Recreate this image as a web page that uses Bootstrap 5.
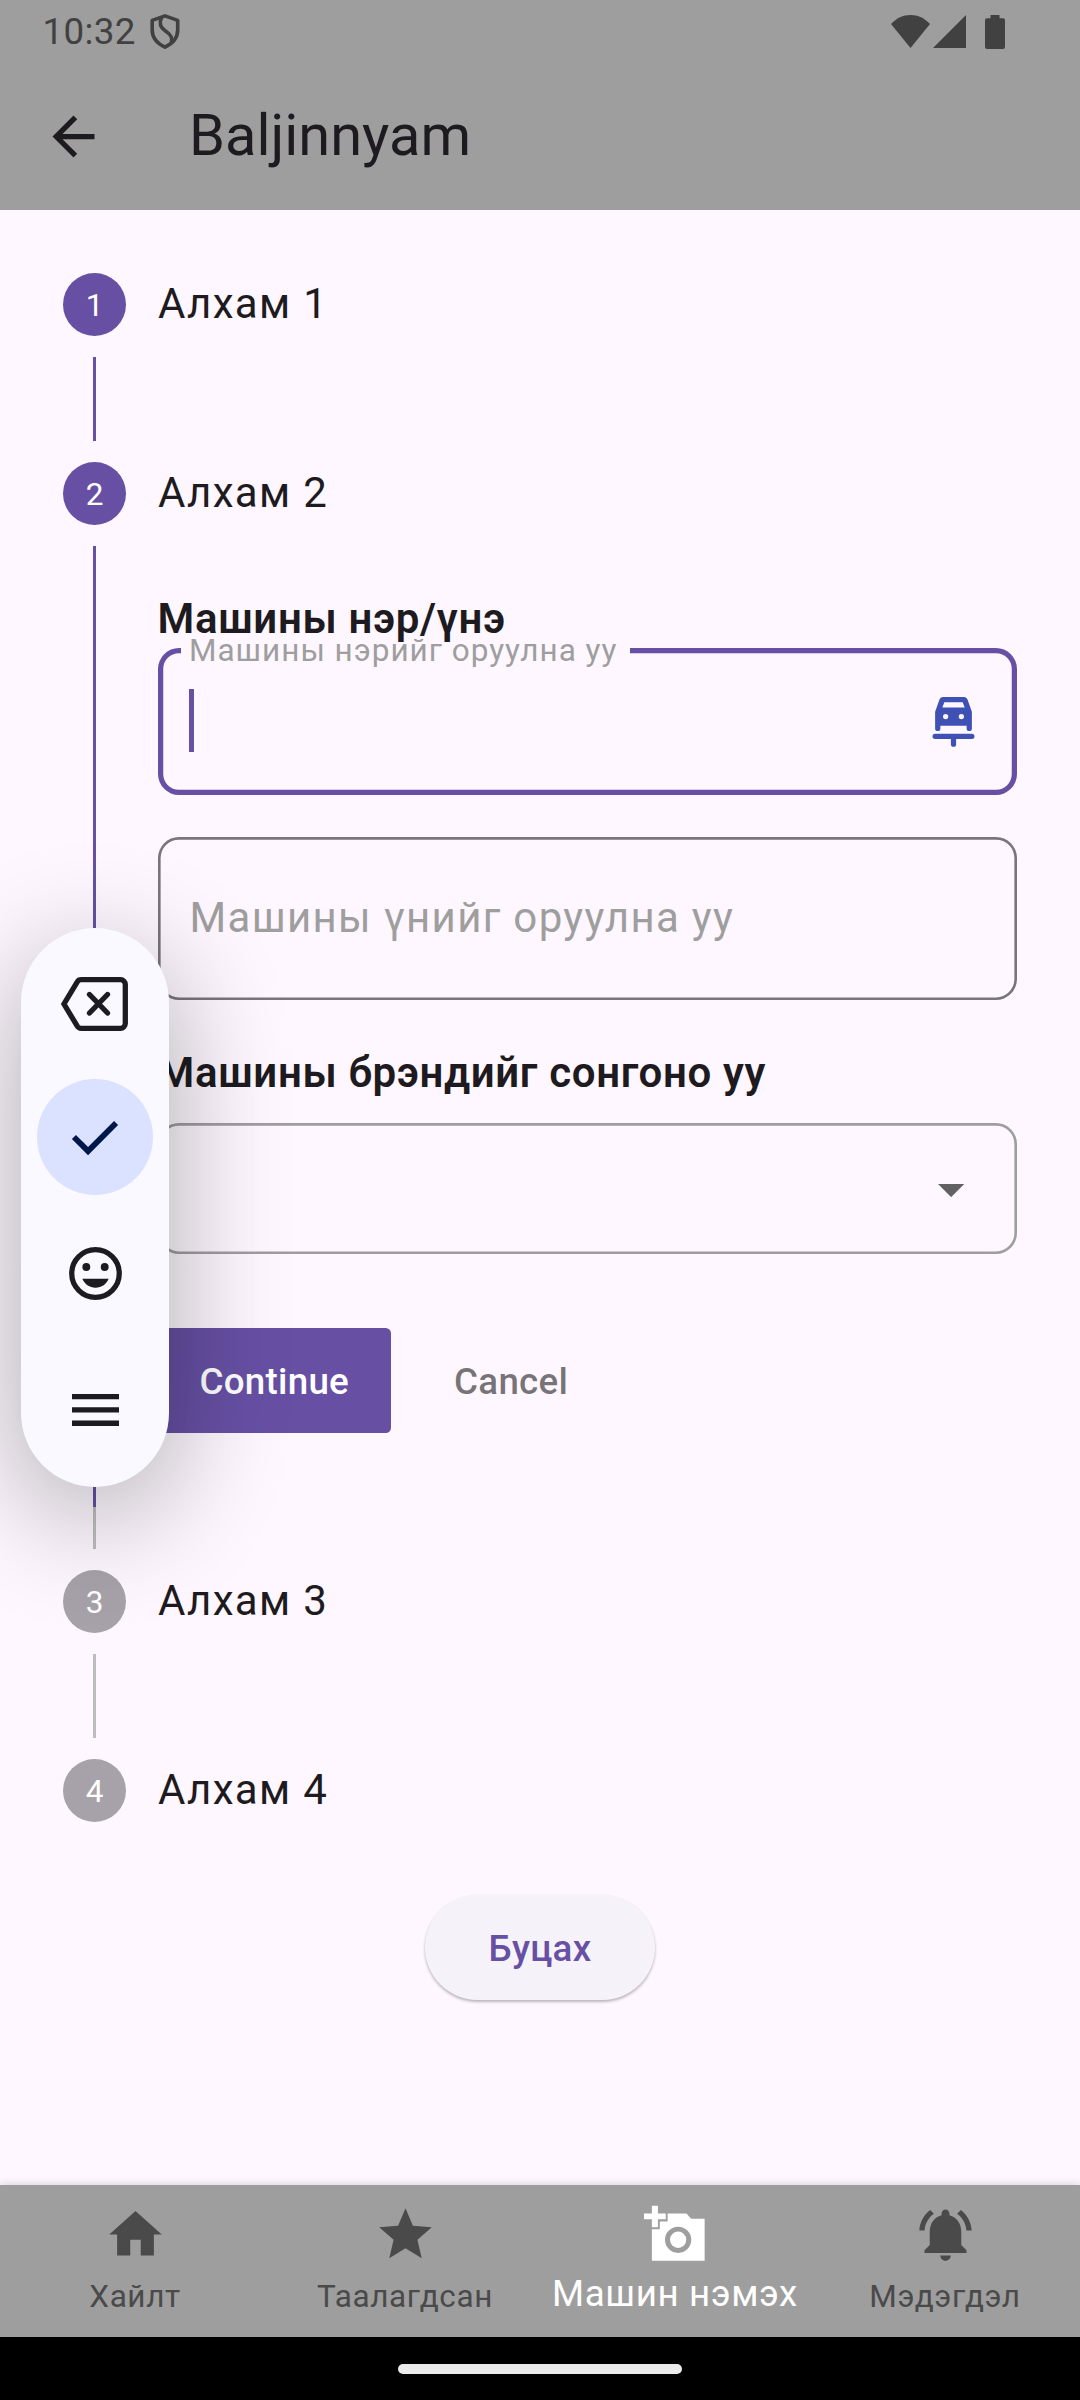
<!DOCTYPE html>
<html lang="mn">
<head>
<meta charset="utf-8">
<meta name="viewport" content="width=device-width, initial-scale=1">
<title>Baljinnyam</title>
<link href="https://cdn.jsdelivr.net/npm/bootstrap@5.3.0/dist/css/bootstrap.min.css" rel="stylesheet">
<style>
  :root { --violet: #6750a4; --gray: #9e9e9e; --ink: #1d1b20; --surface: #fef7ff; }
  body { font-family: Roboto, "Liberation Sans", sans-serif; background: var(--surface); color: var(--ink); font-size: 42px; letter-spacing: 1.3125px; }
  svg { display: block; flex: none; }
  .screen { width: 1080px; height: 2400px; overflow: hidden; }
  .top-area { background: var(--gray); height: 210px; }
  .status-row { height: 63px; padding: 0 75px 0 42.5px; color: #414141; }
  .clock { font-size: 36.75px; line-height: 63px; letter-spacing: .35px; }
  .app-row { height: 147px; padding-left: 42px; }
  .app-title { font-size: 57.75px; line-height: 60px; letter-spacing: 0; margin-left: 84px; font-weight: 400; padding-bottom: 4px; }
  .stepper { padding: 63px 63px 0; }
  .step-head { height: 63px; gap: 32px; }
  .step-dot { width: 63px; height: 63px; font-size: 31.5px; line-height: 63px; letter-spacing: 0; background: var(--violet); color: #fff; padding-top: 1px; }
  .step-dot.idle { background: #a7a2a9; }
  .step-name { line-height: 63px; margin-top: -3px; }
  .rail { width: 63px; padding: 21px 0; flex: none; }
  .rail-line { width: 2.625px; background: var(--violet); }
  .rail-line.idle { background: #bdbdbd; }
  .short { height: 84px; }
  .step-body { height: 1045px; gap: 31.5px; }
  .form-col { padding-top: 69px; width: 859px; flex: none; }
  .form-heading { font-size: 42px; line-height: 50px; font-weight: 600; letter-spacing: .66px; margin: 0; }
  .outlined { border-radius: 21px; }
  .field-name { height: 147px; margin-top: 4.4px; box-shadow: inset 0 0 0 5.25px var(--violet); padding: 0 31.5px 2px; }
  .notch-label { left: 23.5px; top: -16px; width: 449px; padding-left: 8px; font-size: 31.5px; line-height: 38px; letter-spacing: .984px; color: var(--gray); white-space: nowrap;
    background: linear-gradient(var(--surface), var(--surface)) 0 15px / 100% 8px no-repeat; }
  .caret-bar { width: 5.25px; height: 63px; background: var(--violet); }
  .field-price { height: 163px; margin-top: 41.6px; box-shadow: inset 0 0 0 2.625px #79747e; padding: 0 32px; color: var(--gray); line-height: 161px; }
  .brand-heading { margin-top: 48px; }
  .field-brand { height: 131.25px; margin-top: 25px; box-shadow: inset 0 0 0 2.625px var(--gray); padding: 3px 52px 0 0; }
  .actions { margin-top: 73.4px; gap: 21px; }
  .act { height: 105px; padding: 0 42px; border: 0; font-size: 36.75px; font-weight: 500; letter-spacing: .26px; line-height: 107px; border-radius: 5.25px; }
  .act-main, .act-main:hover { background: var(--violet); color: #fff; }
  .act-plain { color: rgba(0,0,0,.54); }
  .act-back { margin-top: 73px; width: 230px; border-radius: 53px; background: #f6f2f9; color: var(--violet); box-shadow: 0 2px 3px rgba(0,0,0,.24), 0 1px 3px rgba(0,0,0,.06); padding: 0; }
  .tools { left: 21px; top: 928px; width: 148px; height: 559px; border-radius: 74px; background: #f9f9ff; padding-top: 5px; box-shadow: 0 28px 118px rgba(0,0,0,.33); color: #1b1b21; z-index: 5; }
  .tool { height: 136.3px; }
  .tool:first-child { padding: 5px 2px 0 0; }
  .tool-round { width: 116px; height: 116px; background: #dae2ff; color: #001849; }
  .bottom-nav { background: var(--gray); height: 152.5px; color: #4a4a4a; box-shadow: 0 -1px 8px rgba(0,0,0,.14); z-index: 2; padding-top: 18px; }
  .nav-cell { width: 270px; white-space: nowrap; font-size: 31.5px; line-height: 38px; letter-spacing: .6px; }
  .nav-cell span { margin-top: 12px; }
  .nav-cell.chosen { color: #fff; font-size: 36.75px; letter-spacing: .6px; line-height: 38px; }
  .nav-cell.chosen span { margin-top: 9px; }
  .gesture { background: #000; height: 63px; padding-top: 27px; }
  .gesture-bar { width: 284px; height: 10px; background: #ebebeb; }
</style>
</head>
<body>
<div class="screen d-flex flex-column position-relative">
  <header class="top-area flex-shrink-0">
    <div class="status-row d-flex align-items-center">
      <span class="clock">10:32</span>
      <svg width="30" height="35" viewBox="0 0 30 35" fill="none" stroke="currentColor" stroke-width="3.6" style="margin-left:14.5px"><path d="M15 1.9 27.7 6.4V16c0 7.5-4.8 13.4-12.7 17.2C7 29.4 2.2 23.5 2.2 16V6.4z" stroke-linejoin="round"/><path d="M11.5 3.5C8.5 10 11 14 15.5 17c5.5 3.5 7 6.500 6 11.500"/></svg>
      <svg class="ms-auto" width="39" height="33" viewBox="0 0 39 33" fill="currentColor"><path d="M0 9C5.500 3.200 12 0 19.500 0S33.500 3.200 39 9L19.500 33z"/></svg>
      <svg width="33" height="33" viewBox="0 0 33 33" fill="currentColor" style="margin-left:3.500px"><path d="M33 0v33H0z"/></svg>
      <svg width="20" height="34" viewBox="0 0 20 34" fill="currentColor" style="margin-left:19px"><path d="M5.500 0h9v3.300H18a2 2 0 0 1 2 2V32a2 2 0 0 1-2 2H2a2 2 0 0 1-2-2V5.300a2 2 0 0 1 2-2h3.500z"/></svg>
    </div>
    <div class="app-row d-flex align-items-center">
      <svg width="63" height="63" viewBox="0 0 24 24" fill="var(--ink)"><path d="M20 11H7.830l5.590-5.590L12 4l-8 8 8 8 1.410-1.410L7.830 13H20v-2z"/></svg>
      <h1 class="app-title mb-0">Baljinnyam</h1>
    </div>
  </header>

  <main class="flex-grow-1 d-flex flex-column">
    <div class="stepper">
      <div class="step-head d-flex align-items-center"><div class="step-dot rounded-circle text-center">1</div><div class="step-name">Алхам 1</div></div>
      <div class="rail d-flex flex-column align-items-center"><div class="rail-line short"></div></div>

      <div class="step-head d-flex align-items-center"><div class="step-dot rounded-circle text-center">2</div><div class="step-name">Алхам 2</div></div>
      <div class="step-body d-flex">
        <div class="rail d-flex flex-column align-items-center">
          <div class="rail-line flex-grow-1"></div>
          <div class="rail-line idle" style="height:42px"></div>
        </div>
        <div class="form-col">
          <h2 class="form-heading">Машины нэр/үнэ</h2>
          <div class="outlined field-name position-relative d-flex align-items-center justify-content-between">
            <label class="notch-label position-absolute">Машины нэрийг оруулна уу</label>
            <div class="caret-bar"></div>
            <svg width="63" height="63" viewBox="0 0 24 24" fill="#3f51b5"><path fill-rule="evenodd" d="M8 3h8c.6 0 1.100.4 1.300.9L19 8.700V15a1 1 0 0 1-2 0v-1H7v1a1 1 0 0 1-2 0V8.700l1.700-4.800C6.900 3.400 7.400 3 8 3zm.5 2-.75 2h8.500l-.75-2zM9 9.500a1 1 0 1 0 0 2 1 1 0 0 0 0-2zm6 0a1 1 0 1 0 0 2 1 1 0 0 0 0-2z"/><path d="M5 17h14a1 1 0 0 1 0 2h-6v2a1 1 0 0 1-2 0v-2H5a1 1 0 0 1 0-2z"/></svg>
          </div>
          <div class="outlined field-price">Машины үнийг оруулна уу</div>
          <h2 class="form-heading brand-heading">Машины брэндийг сонгоно уу</h2>
          <div class="outlined field-brand d-flex align-items-center justify-content-end">
            <svg width="26.250" height="13.100" viewBox="0 0 10 5" fill="#616161"><path d="M0 0l5 5 5-5z"/></svg>
          </div>
          <div class="actions d-flex">
            <button type="button" class="btn act act-main">Continue</button>
            <button type="button" class="btn act act-plain">Cancel</button>
          </div>
        </div>
      </div>

      <div class="step-head d-flex align-items-center"><div class="step-dot idle rounded-circle text-center">3</div><div class="step-name">Алхам 3</div></div>
      <div class="rail d-flex flex-column align-items-center"><div class="rail-line idle short"></div></div>
      <div class="step-head d-flex align-items-center"><div class="step-dot idle rounded-circle text-center">4</div><div class="step-name">Алхам 4</div></div>
    </div>
    <button type="button" class="btn act act-back align-self-center">Буцах</button>
  </main>

  <nav class="bottom-nav d-flex flex-shrink-0 position-relative">
    <div class="nav-cell d-flex flex-column align-items-center">
      <svg width="63" height="63" viewBox="0 0 24 24" fill="currentColor"><path d="M10 20v-6h4v6h5v-8h3L12 3 2 12h3v8z"/></svg>
      <span>Хайлт</span>
    </div>
    <div class="nav-cell d-flex flex-column align-items-center">
      <svg width="63" height="63" viewBox="0 0 24 24" fill="currentColor"><path d="M12 17.270 18.180 21l-1.640-7.030L22 9.240l-7.190-.61L12 2 9.190 8.630 2 9.240l5.460 4.730L5.820 21z"/></svg>
      <span>Таалагдсан</span>
    </div>
    <div class="nav-cell chosen d-flex flex-column align-items-center">
      <svg width="63" height="63" viewBox="0 0 24 24" fill="currentColor"><path fill-rule="evenodd" d="M3 4V1h2.300v3h3v2.200h-3v3H3v-3H0V4zM3 22V10h3V7h3V4h7.170L18 6h5.100v16zM13 9a5 5 0 1 0 0 10 5 5 0 0 0 0-10z"/><circle cx="13" cy="14" r="3.100"/></svg>
      <span>Машин нэмэх</span>
    </div>
    <div class="nav-cell d-flex flex-column align-items-center">
      <svg width="63" height="63" viewBox="0 0 24 24" fill="currentColor"><path d="M7.580 4.080 6.150 2.650C3.750 4.480 2.170 7.300 2.030 10.500h2c.15-2.650 1.510-4.970 3.550-6.420zm12.390 6.420h2c-.15-3.200-1.730-6.020-4.120-7.850l-1.420 1.430c2.020 1.450 3.390 3.770 3.540 6.420zM18 11c0-3.070-1.640-5.640-4.500-6.320V4c0-.83-.67-1.500-1.500-1.500s-1.500.67-1.500 1.500v.68C7.630 5.360 6 7.920 6 11v5l-2 2v1h16v-1l-2-2zm-6 11c1.100 0 2-.9 2-2h-4c0 1.100.9 2 2 2z"/></svg>
      <span>Мэдэгдэл</span>
    </div>
  </nav>
  <div class="gesture flex-shrink-0"><div class="gesture-bar rounded-pill mx-auto"></div></div>

  <aside class="tools position-absolute d-flex flex-column align-items-center">
    <div class="tool d-flex align-items-center">
      <svg width="67" height="54" viewBox="0 0 67 54" fill="none" stroke="currentColor" stroke-width="5.300"><path d="M20 2.700h39.500a4.800 4.800 0 0 1 4.800 4.800v39a4.800 4.800 0 0 1-4.800 4.800H20c-1.500 0-2.800-.7-3.600-1.900L3 27 16.400 4.600c.8-1.200 2.100-1.900 3.600-1.900z"/><path d="M28.500 17.500l18 18.500m0-18.500l-18 18.500" stroke-linecap="round"/></svg>
    </div>
    <div class="tool d-flex align-items-center">
      <div class="tool-round rounded-circle d-flex align-items-center justify-content-center">
        <svg width="68" height="68" viewBox="0 -.4 24 24" fill="currentColor"><path d="M9.550 18 3.850 12.300 5.275 10.875 9.550 15.150 18.725 5.975 20.150 7.400z"/></svg>
      </div>
    </div>
    <div class="tool d-flex align-items-center">
      <svg width="63" height="63" viewBox="0 0 24 24" fill="currentColor"><circle cx="12" cy="12" r="9.050" fill="none" stroke="currentColor" stroke-width="2"/><circle cx="8.500" cy="9.500" r="1.500"/><circle cx="15.500" cy="9.500" r="1.500"/><path d="M7 14h10c-.8 2-2.700 3.400-5 3.400S7.800 16 7 14z"/></svg>
    </div>
    <div class="tool d-flex align-items-center">
      <svg width="47" height="32" viewBox="0 0 47 32" fill="currentColor"><path d="M0 0h47v5.300H0zM0 13.300h47v5.300H0zM0 26.600h47v5.300H0z"/></svg>
    </div>
  </aside>
</div>
<script src="https://cdn.jsdelivr.net/npm/bootstrap@5.3.0/dist/js/bootstrap.bundle.min.js"></script>
</body>
</html>
